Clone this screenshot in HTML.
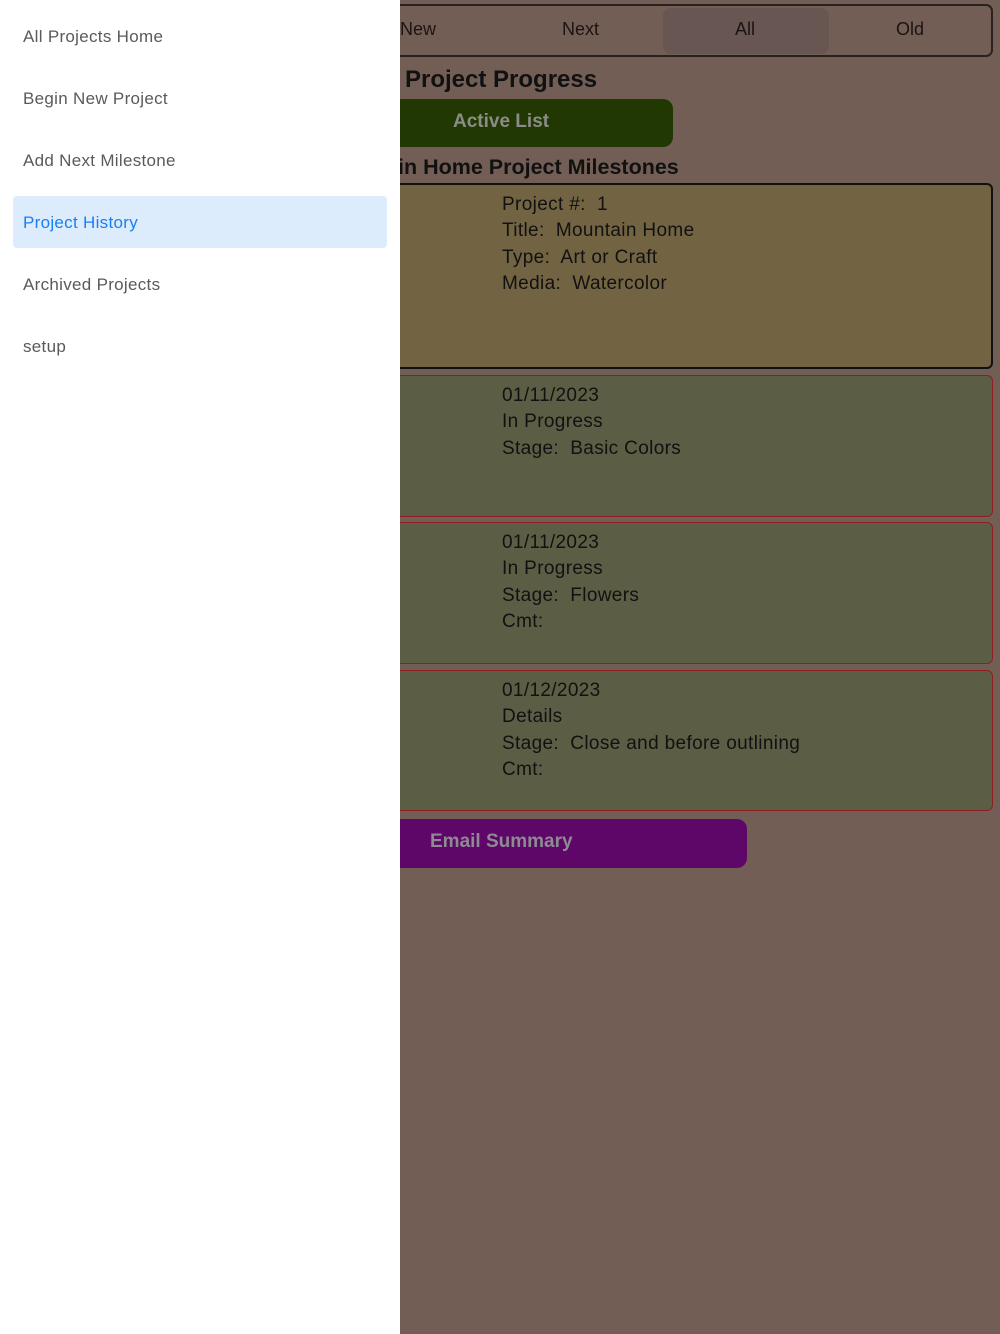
<!DOCTYPE html>
<html><head><meta charset="utf-8"><style>
*{margin:0;padding:0;box-sizing:border-box}
body{width:1000px;height:1334px;background:#725e55;font-family:"Liberation Sans",sans-serif;position:relative;overflow:hidden;color:#111}
.a{position:absolute}
.drawer{left:0;top:0;width:400px;height:1334px;background:#fff;z-index:5}
.mi{position:absolute;left:23px;font-size:17px;color:#5a5a5a;letter-spacing:0.3px}
.tabs{left:330px;top:4px;width:663px;height:53px;border:2px solid #2a2220;border-radius:7px}
.tab{position:absolute;top:19px;font-size:18px;color:#1a1412}
.card{left:340px;width:653px;border-radius:6px;font-size:19px;line-height:26.3px;padding-left:160px;letter-spacing:0.35px}
.card1{top:183px;height:186px;background:#726442;border:2px solid #111;padding-top:7px}
.cg{background:#5b5e45;border:1.5px solid #8e1f1f;padding-top:7px;padding-left:161px}
.btn{border-radius:10px;font-weight:bold;font-size:19px;color:#8a8a8a}
</style></head><body>
<div class="a drawer">
<div class="mi" style="top:27px">All Projects Home</div>
<div class="mi" style="top:89px">Begin New Project</div>
<div class="mi" style="top:151px">Add Next Milestone</div>
<div class="a" style="left:13px;top:196px;width:374px;height:52px;background:#ddecfd;border-radius:4px"></div>
<div class="mi" style="top:213px;color:#1a7ff0">Project History</div>
<div class="mi" style="top:275px">Archived Projects</div>
<div class="mi" style="top:337px">setup</div>
</div>
<div class="a tabs"></div>
<div class="a" style="left:663px;top:8px;width:166px;height:46px;background:#685653;border-radius:8px"></div>
<div class="tab" style="left:400px">New</div>
<div class="tab" style="left:562px">Next</div>
<div class="tab" style="left:735px">All</div>
<div class="tab" style="left:896px">Old</div>
<div class="a" style="left:405px;top:66px;font-size:24px;font-weight:bold">Project Progress</div>
<div class="a btn" style="left:330px;top:99px;width:343px;height:48px;background:#213802"></div>
<div class="a" style="left:453px;top:111px;font-size:19px;font-weight:bold;color:#8c8c86">Active List</div>
<div class="a" style="left:398px;top:155px;font-size:21.5px;font-weight:bold">in Home Project Milestones</div>
<div class="a card card1">Project #:&nbsp; 1<br>Title:&nbsp; Mountain Home<br>Type:&nbsp; Art or Craft<br>Media:&nbsp; Watercolor</div>
<div class="a card cg" style="top:375px;height:142px">01/11/2023<br>In Progress<br>Stage:&nbsp; Basic Colors</div>
<div class="a card cg" style="top:522px;height:142px">01/11/2023<br>In Progress<br>Stage:&nbsp; Flowers<br>Cmt:</div>
<div class="a card cg" style="top:670px;height:141px">01/12/2023<br>Details<br>Stage:&nbsp; Close and before outlining<br>Cmt:</div>
<div class="a btn" style="left:330px;top:819px;width:417px;height:49px;background:#5e0768"></div>
<div class="a" style="left:430px;top:831px;font-size:19px;font-weight:bold;color:#8c8a92">Email Summary</div>
</body></html>
